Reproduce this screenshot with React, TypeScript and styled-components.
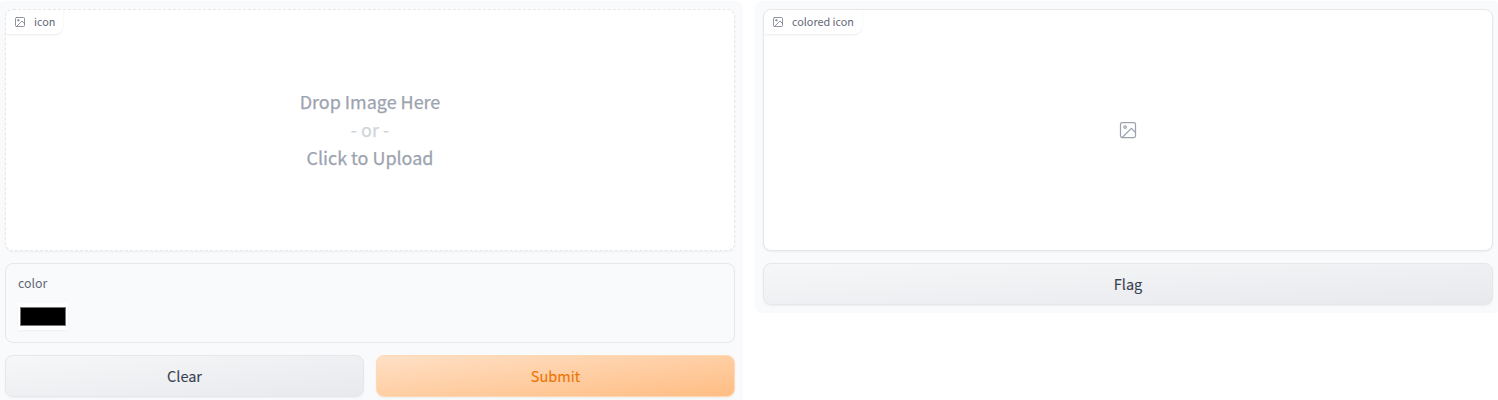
import React from 'react';
import styled, { createGlobalStyle, css } from 'styled-components';

const GlobalStyle = createGlobalStyle`
  *, *::before, *::after { box-sizing: border-box; }
  html, body { margin: 0; background: #fff; }
  body {
    height: 400px;
    overflow: hidden;
    font-family: 'Source Sans Pro', 'Noto Sans CJK SC', 'Noto Sans', sans-serif;
  }
`;

const Page = styled.main`
  display: grid;
  grid-template-columns: 746px 746px;
  column-gap: 12px;
  align-items: start;
  height: 400px;
  margin: 0 -3px;
  padding-top: 1px;
  overflow: hidden;
`;

const Panel = styled.section`
  display: flex;
  flex-direction: column;
  gap: 12px;
  padding: 8px;
  border-radius: 8px;
  background: #f9fafb;
`;

const ImageBlock = styled.div<{ $dashed?: boolean }>`
  position: relative;
  display: flex;
  flex-direction: column;
  align-items: center;
  justify-content: center;
  height: 242px;
  border: 1px ${(p) => (p.$dashed ? 'dashed' : 'solid')} #e5e7eb;
  border-radius: 8px;
  background: #fff;
  box-shadow: 0 1px 2px rgba(0, 0, 0, 0.05);
  overflow: hidden;
  color: #9ca3af;
`;

const BlockLabel = styled.div`
  position: absolute;
  top: 0;
  left: 0;
  display: flex;
  align-items: center;
  gap: 8px;
  height: 24px;
  padding: 0 8px;
  border-radius: 0 0 8px 0;
  box-shadow: 0 1px 2px rgba(0, 0, 0, 0.08);
  background: #fff;
  color: #6b7280;
  font-size: 10.8px;
  line-height: 22px;
`;

const LabelText = styled.span`
  height: 24px;
  color: #5f6777;
`;

const Prompt = styled.div`
  margin-top: -2px;
  font-size: 17.95px;
  line-height: 28px;
  text-align: center;
  -webkit-text-stroke: 0.25px currentColor;
`;

const Or = styled.div`
  color: #d1d5db;
`;

const ColorBlock = styled.div`
  height: 80px;
  padding: 9px 12px;
  border: 1px solid #e5e7eb;
  border-radius: 8px;
`;

const FieldLabel = styled.div`
  color: #5f6777;
  font-size: 12.4px;
  line-height: 20px;
`;

const Swatch = styled.div`
  width: 50px;
  height: 27px;
  margin-top: 10px;
  padding: 4px 2px;
  background: #fff;
  box-shadow: 0 1px 2px rgba(0, 0, 0, 0.05);
`;

const SwatchColor = styled.div`
  height: 19px;
  border: 1px solid #767676;
  background: #000;
`;

const Actions = styled.div`
  display: grid;
  grid-template-columns: 1fr 1fr;
  gap: 12px;
`;

const primary = css`
  border-color: #ffd8b4;
  background: linear-gradient(to bottom right, #ffe0c6, #ffbd83);
  color: #ee7400;
`;

const Button = styled.button<{ $primary?: boolean }>`
  height: 42px;
  padding: 0;
  border: 1px solid #e5e7eb;
  border-radius: 8px;
  background: linear-gradient(to bottom right, #f6f7f8, #e8e9ed);
  box-shadow: 0 1px 2px rgba(0, 0, 0, 0.05);
  color: #374151;
  font-family: inherit;
  font-size: 14.5px;
  line-height: 40px;
  -webkit-text-stroke: 0.1px currentColor;
  ${(p) => p.$primary && primary}
`;

const ImageIcon = ({ size }: { size: number }) => (
  <svg
    width={size}
    height={size}
    viewBox="0 0 24 24"
    fill="none"
    stroke="currentColor"
    strokeWidth="1.5"
    strokeLinecap="round"
    strokeLinejoin="round"
  >
    <rect x="3" y="3" width="18" height="18" rx="2" />
    <circle cx="8.5" cy="8.5" r="1.5" />
    <polyline points="21 15 16 10 5 21" />
  </svg>
);

export default function App() {
  return (
    <>
      <GlobalStyle />
      <Page>
        <Panel>
          <ImageBlock $dashed>
            <BlockLabel>
              <ImageIcon size={12} />
              <LabelText>icon</LabelText>
            </BlockLabel>
            <Prompt>
              <div>Drop Image Here</div>
              <Or>- or -</Or>
              <div>Click to Upload</div>
            </Prompt>
          </ImageBlock>
          <ColorBlock>
            <FieldLabel>color</FieldLabel>
            <Swatch>
              <SwatchColor />
            </Swatch>
          </ColorBlock>
          <Actions>
            <Button>Clear</Button>
            <Button $primary>Submit</Button>
          </Actions>
        </Panel>
        <Panel>
          <ImageBlock>
            <BlockLabel>
              <ImageIcon size={12} />
              <LabelText>colored icon</LabelText>
            </BlockLabel>
            <ImageIcon size={20} />
          </ImageBlock>
          <Button>Flag</Button>
        </Panel>
      </Page>
    </>
  );
}
